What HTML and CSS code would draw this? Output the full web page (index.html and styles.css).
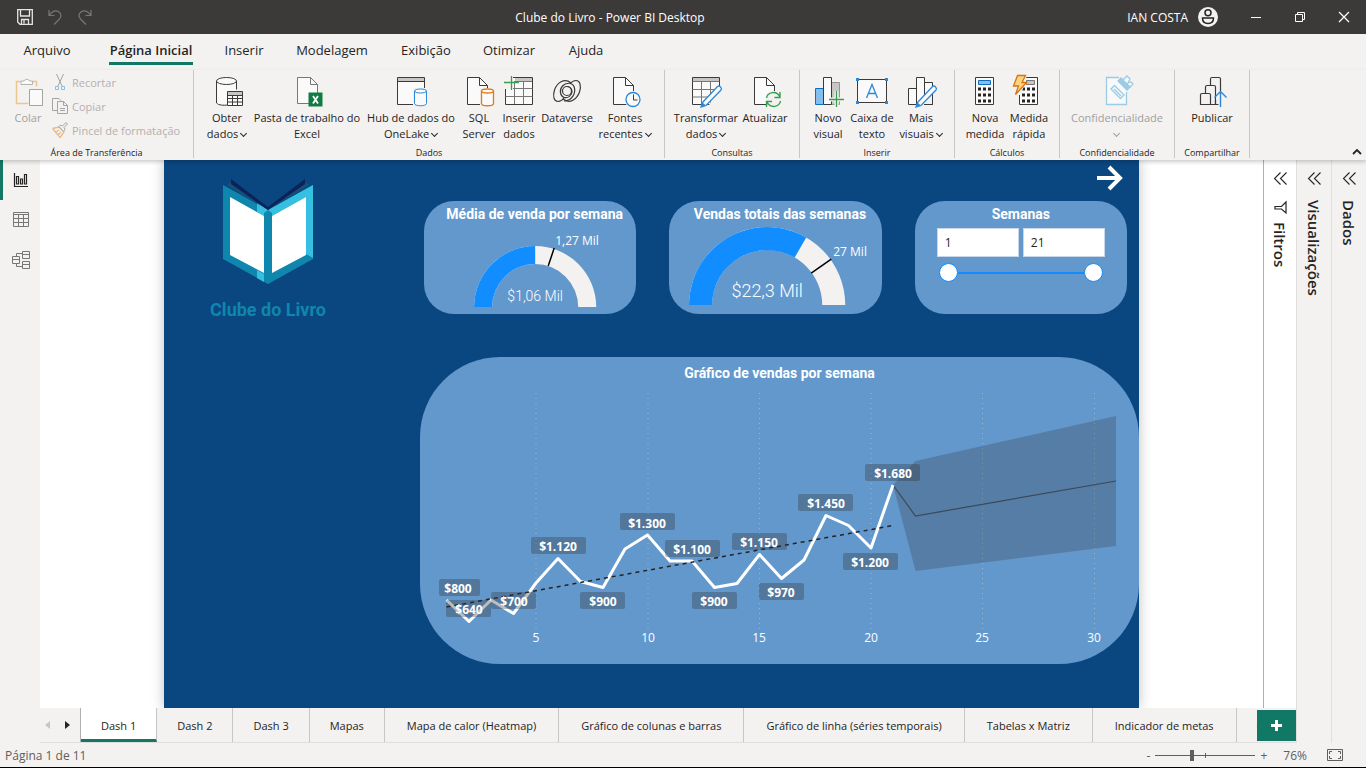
FILE: index.html
```html
<!DOCTYPE html>
<html lang="pt-BR">
<head>
<meta charset="utf-8">
<meta name="viewport" content="width=device-width, initial-scale=1">
<title>Clube do Livro - Power BI Desktop</title>
<link rel="stylesheet" href="styles.css">
</head>
<body>
<header class="titlebar">
  <div class="quick">
    <button class="quick-btn" aria-label="Salvar"><svg width="18" height="18" viewBox="0 0 18 18" fill="none" stroke="#e6e5e4" stroke-width="1.3"><path d="M1.700 1.700h14.600v14.600H4l-2.300-2.300zM4.500 2v6h9V2M5.500 16v-4.500h7V16M8 12v3.500"/></svg></button>
    <button class="quick-btn" aria-label="Desfazer"><svg width="18" height="18" viewBox="0 0 18 18" fill="none" stroke="#797775" stroke-width="1.200"><path d="M3 2v5.500h5.500M3 7.500C6 3 10 1.500 13 4c2.500 2 2.500 4.500.5 7L8 16.500"/></svg></button>
    <button class="quick-btn" aria-label="Refazer"><svg width="18" height="18" viewBox="0 0 18 18" fill="none" stroke="#797775" stroke-width="1.200"><path d="M15 2v5.500H9.500M15 7.500C12 3 8 1.500 5 4 2.500 6 2.500 8.500 4.500 11L10 16.500"/></svg></button>
  </div>
  <h1 class="title">Clube do Livro - Power BI Desktop</h1>
  <div class="window-tools">
    <span class="user">IAN COSTA</span>
    <svg class="avatar" width="20" height="20" viewBox="0 0 20 20"><circle cx="10" cy="10" r="10" fill="#f3f2f1"/><g fill="none" stroke="#252423" stroke-width="1.500"><circle cx="10" cy="5.800" r="3"/><path d="M4.500 11h11c0 3.500-2 5.500-5.500 5.500S4.500 14.500 4.500 11z"/></g></svg>
    <button class="win-btn" aria-label="Minimizar"><svg width="12" height="12" viewBox="0 0 12 12" fill="none" stroke="#fff"><path d="M1 6.500h10"/></svg></button>
    <button class="win-btn" aria-label="Restaurar"><svg width="12" height="12" viewBox="0 0 12 12" fill="none" stroke="#fff"><path d="M1.500 3.500h7v7h-7zM3.500 3.500v-2h7v7h-2"/></svg></button>
    <button class="win-btn" aria-label="Fechar"><svg width="12" height="12" viewBox="0 0 12 12" fill="none" stroke="#fff" stroke-width="1.300"><path d="M1 1l10 10M11 1L1 11"/></svg></button>
  </div>
</header>

<nav class="menu">
  <button class="menu-tab w48">Arquivo</button>
  <button class="menu-tab w84 active">Página Inicial</button>
  <button class="menu-tab w38">Inserir</button>
  <button class="menu-tab w74">Modelagem</button>
  <button class="menu-tab w50">Exibição</button>
  <button class="menu-tab w52">Otimizar</button>
  <button class="menu-tab w38">Ajuda</button>
</nav>

<div class="ribbon">
  <section class="group clipboard">
    <div class="tools">
      <button class="tool w40 off">
        <svg width="32" height="32" viewBox="0 0 32 32" fill="none"><path d="M8.500 5.500h-4v22h12M20.500 5.500h4v5" stroke="#ecc48f" stroke-width="1.500"/><path d="M9 8.500V5h3a3 3 0 0 1 5.500 0h3v3.500z" fill="#fafafa" stroke="#b5b3b1"/><path d="M17.500 13.500h13v16h-13z" fill="#fafafa" stroke="#a5a3a1"/></svg>
        <span>Colar</span></button>
      <div class="stack">
        <button class="mini"><svg width="16" height="16" viewBox="0 0 16 16" fill="none" stroke="#a6a4a2"><path d="M4.500 0l5.500 12M11.500 0L6 12"/><path d="M3.500 12.500h3v3h-3zM9.500 12.500h3v3h-3z" stroke="#8fbfe0"/></svg>Recortar</button>
        <button class="mini"><svg width="16" height="16" viewBox="0 0 16 16" fill="none" stroke="#a6a4a2"><path d="M5 12.500H.5V.5H7l2 2M5.500 3.500h6l4 4v8h-10zM11.500 3.500v4h4M8 10.500h5M8 12.500h5"/></svg>Copiar</button>
        <button class="mini"><svg width="16" height="16" viewBox="0 0 16 16" fill="none" stroke="#a6a4a2"><path d="M.5 6.500L7 5l5 5-4 5.500L.5 6.500M4 10l3-2M6 13l3-3" stroke="#e8ba85" stroke-width="1.300"/><path d="M7 4.500l1.500-1.500 2 1L14 .5l1.500 1.500L12 5.500l1 2-1.500 2z" fill="#f3f2f1"/></svg>Pincel de formatação</button>
      </div>
    </div>
    <h2 class="caption">Área de Transferência</h2>
  </section>

  <section class="group">
    <div class="tools">
      <button class="tool w50">
        <svg width="32" height="32" viewBox="0 0 32 32" fill="#fafafa" stroke="#3b3a39"><path d="M5.500 5v22c2 2.500 8 2.500 11 2M25.500 5v8.500" /><path d="M6 5h19v10h-9v13H8l-2-1z" stroke="none"/><ellipse cx="15.500" cy="5" rx="10" ry="3.500"/><path d="M16.500 15.500h15v14h-15z"/><path d="M17 16h14v3H17z" fill="#c8c6c4" stroke="none"/><path d="M16.500 19.500h15M16.500 22.500h15M16.500 26h15M21.500 19v10.500M26.500 19v10.500" fill="none"/></svg>
        <span>Obter<br>dados <i class="chev"></i></span></button>
      <button class="tool w110">
        <svg width="32" height="32" viewBox="0 0 32 32" fill="#fafafa" stroke="#797775"><path d="M6.500 1.500h13l7 7v19h-20z"/><path d="M19.500 1.500v7h7" fill="none"/><path d="M17.500 16.500h14v14h-14z" fill="#107c41" stroke="none"/><path d="M22 20l5 7.500M27 20l-5 7.500" stroke="#fff" stroke-width="1.800"/></svg>
        <span>Pasta de trabalho do<br>Excel</span></button>
      <button class="tool w98">
        <svg width="32" height="32" viewBox="0 0 32 32" fill="#fafafa" stroke="#3b3a39"><path d="M2.500 1.500h27v27h-27z"/><path d="M3 2h26v3H3z" fill="#c8c6c4" stroke="none"/><path d="M2.500 5.500h27" fill="none"/><path d="M18 12h14v18H18z" fill="#f3f2f1" stroke="none"/><path d="M19.500 15v12.500c0 3 12 3 12 0V15" stroke="#2b88d8"/><ellipse cx="25.500" cy="15" rx="6" ry="2" stroke="#2b88d8"/></svg>
        <span>Hub de dados do<br>OneLake <i class="chev"></i></span></button>
      <button class="tool w38">
        <svg width="32" height="32" viewBox="0 0 32 32" fill="#fafafa" stroke="#3b3a39"><path d="M4.500 1.500h12l8 8v19h-20z"/><path d="M16.500 1.500v8h8" fill="none"/><path d="M17 12h15v18H17z" fill="#f3f2f1" stroke="none"/><path d="M18.500 15v12.500c0 3 12 3 12 0V15" stroke="#e07b1b" stroke-width="1.300"/><ellipse cx="24.500" cy="15" rx="6" ry="2" stroke="#e07b1b" stroke-width="1.300"/></svg>
        <span>SQL<br>Server</span></button>
      <button class="tool w42">
        <svg width="32" height="32" viewBox="0 0 32 32" fill="#fafafa" stroke="#3b3a39"><path d="M2.500 1.500h27v27h-27z"/><path d="M12 2h17v3H12z" fill="#c8c6c4" stroke="none"/><path d="M2.500 12.500h27M2.500 20.500h27M11.500 5v23M20.500 5v23M12 5.500h17" fill="none" stroke="#797775"/><path d="M1 0h9v13H1z" fill="#f3f2f1" stroke="none"/><path d="M8.500 0v14M1 6.500h15" stroke="#34a04c" stroke-width="1.300"/></svg>
        <span>Inserir<br>dados</span></button>
      <button class="tool w54">
        <svg width="32" height="32" viewBox="0 0 32 32" fill="none" stroke="#3b3a39" stroke-width="1.200"><path d="M20 7C13 1.500 6 7 3.500 14 1.500 20.500 3 25.500 7 25.500c2.500 0 4.500-1.500 6-3.500"/><path d="M12 23c7 5.500 14 0 16.500-7C30.500 9.500 29 4.500 25 4.500c-2.500 0-4.500 1.500-6 3.500"/><path d="M13 25c8 0 12.500-8 10-14.500C21 6 14.500 6.500 11.500 10 8 14 9 20 13 21.500c4 1 8-2 8-6 0-3-2.500-5-5-5"/><circle cx="16" cy="15" r="4.500"/></svg>
        <span>Dataverse</span></button>
      <button class="tool w62">
        <svg width="32" height="32" viewBox="0 0 32 32" fill="#fafafa" stroke="#3b3a39"><path d="M4.500 1.500h12l8 8v19h-20z"/><path d="M16.500 1.500v8h8" fill="none"/><circle cx="24" cy="23.500" r="8.500" fill="#f3f2f1" stroke="none"/><circle cx="24" cy="23.500" r="7" stroke="#2b88d8" stroke-width="1.300"/><path d="M24.500 18.500v5.500h4" fill="none"/></svg>
        <span>Fontes<br>recentes <i class="chev"></i></span></button>
    </div>
    <h2 class="caption">Dados</h2>
  </section>

  <section class="group">
    <div class="tools">
      <button class="tool w66">
        <svg width="32" height="32" viewBox="0 0 32 32" fill="#fafafa" stroke="#3b3a39"><path d="M2.500 1.500h27v27h-27z"/><path d="M3 2h26v3H3z" fill="#c8c6c4" stroke="none"/><path d="M2.500 5.500h27M2.500 13.500h27M2.500 21h27M11.500 5v23M20.500 5v23" fill="none" stroke="#797775"/><path d="M17 32h15V9z" fill="#f3f2f1" stroke="none"/><path d="M12.500 26.500L27.500 10.500c2-1.500 5 1.500 3.500 3.500L16 29.500l-5 1.500z" stroke="#2b88d8" stroke-width="1.300"/><path d="M12.500 26.500l3.500 3-5 1.500z" fill="#2b88d8" stroke="none"/></svg>
        <span>Transformar<br>dados <i class="chev"></i></span></button>
      <button class="tool w52">
        <svg width="32" height="32" viewBox="0 0 32 32" fill="#fafafa" stroke="#3b3a39"><path d="M5.500 1.500h12l8 8v19h-20z"/><path d="M17.500 1.500v8h8" fill="none"/><circle cx="25" cy="23.500" r="8.500" fill="#f3f2f1" stroke="none"/><path d="M17.500 22c1-6 10-8 13.500-1M31 16v5.500h-5.500M31.500 25c-1 6-10 8-13.500 1M17.500 31v-5.500H23" fill="none" stroke="#34a04c" stroke-width="1.400"/></svg>
        <span>Atualizar</span></button>
    </div>
    <h2 class="caption">Consultas</h2>
  </section>

  <section class="group">
    <div class="tools">
      <button class="tool w40">
        <svg width="32" height="32" viewBox="0 0 32 32" fill="#fafafa" stroke="#3b3a39"><path d="M3.500 12.500h8v16h-8z" fill="#83beec" stroke="#106ebe"/><path d="M19.500 6.500h8v22h-8z" fill="#c8c6c4" stroke="#979593"/><path d="M11.500 1.500h8v27h-8z"/><path d="M24.500 15v16M17 23.500h15" stroke="#f3f2f1" stroke-width="4"/><path d="M24.500 15v16M17 23.500h15" stroke="#34a04c" stroke-width="1.300"/></svg>
        <span>Novo<br>visual</span></button>
      <button class="tool w48">
        <svg width="32" height="32" viewBox="0 0 32 32" fill="#fafafa" stroke="#3b3a39"><path d="M1.500 3.500h29v23h-29z"/><path d="M0 2h3v3H0zM29 2h3v3h-3zM0 25h3v3H0zM29 25h3v3h-3z" fill="#2b88d8" stroke="none"/><path d="M10.500 22L16 8.500 21.500 22M12.500 17.500h7" fill="none" stroke="#2b88d8" stroke-width="1.300"/></svg>
        <span>Caixa de<br>texto</span></button>
      <button class="tool w50">
        <svg width="32" height="32" viewBox="0 0 32 32" fill="#fafafa" stroke="#3b3a39"><path d="M3.500 12.500h8v16h-8zM19.500 6.500h8v22h-8zM11.500 1.500h8v27h-8z"/><path d="M13 31h14V12z" fill="#f3f2f1" stroke="none"/><path d="M27.500 19v9.500H19" fill="none"/><path d="M12.500 26.500L27.500 10.500c2-1.500 5 1.500 3.500 3.500L16 29.500l-5 1.500z" stroke="#2b88d8" stroke-width="1.300"/><path d="M12.500 26.500l3.500 3-5 1.500z" fill="#2b88d8" stroke="none"/></svg>
        <span>Mais<br>visuais <i class="chev"></i></span></button>
    </div>
    <h2 class="caption">Inserir</h2>
  </section>

  <section class="group">
    <div class="tools">
      <button class="tool w44">
        <svg width="32" height="32" viewBox="0 0 32 32" fill="#fafafa" stroke="#3b3a39"><path d="M6.500 1.500h18v27h-18z"/><path d="M9.500 4.500h12v4h-12z" fill="#83beec" stroke="#106ebe"/><path d="M9 13h13M9 19h13M9 25h13" stroke="#252423" stroke-width="3" stroke-dasharray="3 2"/></svg>
        <span>Nova<br>medida</span></button>
      <button class="tool w44">
        <svg width="32" height="32" viewBox="0 0 32 32" fill="#fafafa" stroke="#3b3a39"><path d="M6.500 1.500h18v27h-18z"/><path d="M13.500 4.500h8v4h-8z" fill="#c8c6c4" stroke="#797775"/><path d="M9 13h13M9 19h13M9 25h13" stroke="#252423" stroke-width="3" stroke-dasharray="3 2"/><path d="M2-1h12L8 19H0z" fill="#f3f2f1" stroke="none"/><path d="M4.500-.5h8L9 6.500h4.500L2.500 18.500 5.500 10h-5z" fill="#fcd581" stroke="#d9730d" stroke-width="1.300"/></svg>
        <span>Medida<br>rápida</span></button>
    </div>
    <h2 class="caption">Cálculos</h2>
  </section>

  <section class="group">
    <div class="tools">
      <button class="tool w98 off">
        <svg width="32" height="32" viewBox="0 0 32 32" fill="#f7f9fa" stroke="#9ccbe6" stroke-width="1.300"><path d="M18 1.500H5.500v27h20V16"/><path d="M10 13l3.500-3.500L23 19l-3.500 3.500zM13 13l7 7"/><path d="M17 5l3-3 9 9-3 3z" fill="#9ccbe6"/><path d="M22 4l4-4 3 3-2 4 3-1 2 2-3 3z"/></svg>
        <span>Confidencialidade<br><i class="chev"></i></span></button>
    </div>
    <h2 class="caption">Confidencialidade</h2>
  </section>

  <section class="group">
    <div class="tools">
      <button class="tool w58">
        <svg width="32" height="32" viewBox="0 0 32 32" fill="#f3f2f1" stroke="#3b3a39" stroke-width="1.200"><path d="M14.500 28.500V3c0-1 .5-1.500 1.500-1.500h7c1 0 1.500.5 1.500 1.500v25.500z"/><path d="M9.500 28.500V11c0-1 .5-1.500 1.500-1.500h7c1 0 1.500.5 1.500 1.500v17.500z"/><path d="M4.500 28.500V19c0-1 .5-1.500 1.500-1.500h7c1 0 1.500.5 1.500 1.500v9.500z"/><path d="M20.500 15h9v15h-9z" stroke="none"/><path d="M19.500 24v4.500h3" fill="none"/><path d="M24.500 31V16M18.500 21.500l6-6 6 6" fill="none" stroke="#2b88d8" stroke-width="1.400"/></svg>
        <span>Publicar</span></button>
    </div>
    <h2 class="caption">Compartilhar</h2>
  </section>
  <button class="collapse" aria-label="Recolher faixa"><svg width="10" height="8" viewBox="0 0 10 8" fill="none" stroke="#252423" stroke-width="1.800"><path d="M1 6l4-4 4 4"/></svg></button>
</div>

<div class="workspace">
  <nav class="views">
    <button class="view current" aria-label="Relatório"><svg width="16" height="16" viewBox="0 0 16 16" fill="none" stroke="#252423" stroke-width="1.200"><path d="M1.500 1v13.500H15M3.500 4.500h2v7.500h-2zM7.500 7h2v5h-2zM11.500 2.500h2V12h-2z"/></svg></button>
    <button class="view" aria-label="Dados"><svg width="16" height="16" viewBox="0 0 16 16" fill="none" stroke="#797775"><path d="M.5.500h15v14H.5zM.5 2.500h15M.5 6.500h15M.5 10.500h15M5.500 2.500v12M10.500 2.500v12"/></svg></button>
    <button class="view" aria-label="Modelo"><svg width="18" height="18" viewBox="0 0 18 18" fill="none" stroke="#797775"><path d="M.5 5.500h7v7h-7zM.5 8.500h7M10.500.500h7v7h-7zM10.500 3.500h7M10.500 10.500h7v7h-7zM10.500 13.500h7M4.500 5.500v-3h6M4.500 12.500v3h6"/></svg></button>
  </nav>

  <div class="center">
    <div class="stage">
      <div class="canvas">
        <main class="report">
          <aside class="brand">
            <svg class="book" width="92" height="106" viewBox="0 0 92 106"><path d="M1 6L46 31 91 6v74L46 105 1 80z" fill="#0f86ad"/><path d="M35 24l11 7L91 6v73l-7-4V18L50 37h-8l-7-4zM35 91l7 4v8l-7-4z" fill="#35bfe0"/><path d="M42 34l4-3 4 3v68l-4 3-4-3z" fill="#0f86ad"/><path d="M9 3L5 6l34 21zM83 3l4 3-34 21z" fill="#185078"/><path d="M9 5v-5l37 28L83 0v5L46 31z" fill="#0b2359"/><path d="M8 18l34 19v57L8 76zM84 18L50 37v57l34-18z" fill="#fff"/></svg>
            <p class="brand-name">Clube do Livro</p>
          </aside>
          <div class="board">
            <div class="next"><button class="next-btn" aria-label="Próxima página"><svg width="28" height="26" viewBox="0 0 28 26" fill="none" stroke="#fff" stroke-width="4"><path d="M1 13h24M13 2l11 11-11 11"/></svg></button></div>
            <div class="cards">
              <section class="card">
                <h3 class="card-title gauge-title">Média de venda por semana</h3>
                <svg class="plot" viewBox="0 0 212 89">
                  <path d="M50 82a61 61 0 0 1 122 0h-18a43 43 0 0 0-86 0z" fill="#f3f2f1"/>
                  <path d="M50 82a61 61 0 0 1 61-61v18a43 43 0 0 0-43 43z" fill="#118dff"/>
                  <path d="M124 41l6-18" stroke="#000" stroke-width="1.500"/>
                  <text class="goal" x="131" y="20">1,27 Mil</text>
                  <text class="value small" x="111" y="76">$1,06 Mil</text>
                </svg>
              </section>
              <section class="card">
                <h3 class="card-title gauge-title">Vendas totais das semanas</h3>
                <svg class="plot" viewBox="0 0 212 89">
                  <path d="M20 80a78 78 0 0 1 156 0h-23a55 55 0 0 0-110 0z" fill="#f3f2f1"/>
                  <path d="M20 80A78 78 0 0 1 137 12.500l-11.500 20A55 55 0 0 0 43 80z" fill="#118dff"/>
                  <path d="M142 48l20-14" stroke="#000" stroke-width="1.500"/>
                  <text class="goal" x="164" y="31">27 Mil</text>
                  <text class="value" x="98" y="72">$22,3 Mil</text>
                </svg>
              </section>
              <section class="card">
                <h3 class="card-title">Semanas</h3>
                <div class="slicer">
                  <div class="bounds">
                    <input class="bound" type="text" value="1" aria-label="Semana inicial">
                    <input class="bound" type="text" value="21" aria-label="Semana final">
                  </div>
                  <div class="span">
                    <input class="slide" type="range" min="1" max="11" value="1" aria-label="Início">
                    <input class="slide" type="range" min="11" max="21" value="21" aria-label="Fim">
                  </div>
                </div>
              </section>
            </div>
            <section class="chart">
              <h3 class="card-title">Gráfico de vendas por semana</h3>
              <svg class="plot" viewBox="420 389 719 275">
                <path class="grid" d="M536 393v236M648 393v236M759.500 393v236M871 393v236M982.500 393v236M1094.500 393v236"/>
                <path d="M893 485l22.500-24L1116 416v130L915.500 571z" fill="#333" fill-opacity=".26"/>
                <path d="M893 485l22.500 31L1116 481" fill="none" stroke="#3a4a58" stroke-width="1.200"/>
                <polyline points="446.500,600 469,621.500 491,600 513.500,613.500 536,583 558,558.500 580.500,581.500 603,587.500 625,549 647.500,535 670,561 692,561 714.500,587.500 737,583.500 759.500,554.500 781.500,578.500 804,560 826,515.500 848.500,525.500 871,548 893,485" fill="none" stroke="#fff" stroke-width="3" stroke-linejoin="round"/>
                <path d="M446.500 607L893 525.500" stroke="#252423" stroke-width="1.500" stroke-dasharray="4 4"/>
                <g class="tag">
                  <rect x="439" y="579" width="41" height="17" rx="2"/><rect x="446" y="600" width="45" height="17" rx="2"/><rect x="491" y="592" width="45" height="17" rx="2"/><rect x="531" y="537" width="55" height="17" rx="2"/><rect x="580" y="592" width="45" height="17" rx="2"/><rect x="620" y="513" width="55" height="17" rx="2"/><rect x="665" y="540" width="55" height="17" rx="2"/><rect x="692" y="592" width="45" height="17" rx="2"/><rect x="732" y="533" width="55" height="17" rx="2"/><rect x="759" y="583" width="45" height="17" rx="2"/><rect x="798" y="494" width="55" height="17" rx="2"/><rect x="843" y="553" width="55" height="17" rx="2"/><rect x="865" y="464" width="55" height="17" rx="2"/>
                </g>
                <g class="tag-text">
                  <text x="458" y="593">$800</text><text x="469" y="614">$640</text><text x="514" y="606">$700</text><text x="558" y="551">$1.120</text><text x="603" y="606">$900</text><text x="647" y="528">$1.300</text><text x="692" y="554">$1.100</text><text x="714" y="606">$900</text><text x="759" y="547">$1.150</text><text x="781" y="597">$970</text><text x="826" y="508">$1.450</text><text x="870" y="567">$1.200</text><text x="893" y="478">$1.680</text>
                </g>
                <g class="axis">
                  <text x="536" y="642">5</text><text x="648" y="642">10</text><text x="759" y="642">15</text><text x="871" y="642">20</text><text x="982" y="642">25</text><text x="1094" y="642">30</text>
                </g>
              </svg>
            </section>
          </div>
        </main>
      </div>
      <aside class="pane filters">
        <button class="expand" aria-label="Expandir Filtros"><svg width="13" height="13" viewBox="0 0 13 13" fill="none" stroke="#252423" stroke-width="1.100"><path d="M6.500.5l-6 6 6 6M12.500.5l-6 6 6 6"/></svg></button>
        <svg class="funnel" width="13" height="13" viewBox="0 0 13 13" fill="none" stroke="#252423" stroke-width="1.200"><path d="M12 1v11L7.500 8H1V5.500h6.500z"/></svg>
        <span class="pane-name">Filtros</span>
      </aside>
    </div>
    <nav class="pages">
      <button class="arrow dim" aria-label="Anterior"><svg width="5" height="8" viewBox="0 0 5 8"><path d="M5 0v8L0 4z" fill="currentColor"/></svg></button>
      <button class="arrow" aria-label="Próxima"><svg width="5" height="8" viewBox="0 0 5 8"><path d="M0 0v8l5-4z" fill="currentColor"/></svg></button>
      <div class="page-list">
        <button class="page on">Dash 1</button>
        <button class="page">Dash 2</button>
        <button class="page">Dash 3</button>
        <button class="page">Mapas</button>
        <button class="page wide">Mapa de calor (Heatmap)</button>
        <button class="page wide">Gráfico de colunas e barras</button>
        <button class="page wide">Gráfico de linha (séries temporais)</button>
        <button class="page wide">Tabelas x Matriz</button>
        <button class="page wide">Indicador de metas</button>
        <button class="page">G</button>
      </div>
      <button class="add" aria-label="Nova página"><svg width="11" height="11" viewBox="0 0 11 11" stroke="#fff" stroke-width="3"><path d="M5.500 0v11M0 5.500h11"/></svg></button>
    </nav>
  </div>

  <aside class="pane">
    <button class="expand" aria-label="Expandir Visualizações"><svg width="13" height="13" viewBox="0 0 13 13" fill="none" stroke="#252423" stroke-width="1.100"><path d="M6.500.5l-6 6 6 6M12.500.5l-6 6 6 6"/></svg></button>
    <span class="pane-name">Visualizações</span>
  </aside>
  <aside class="pane">
    <button class="expand" aria-label="Expandir Dados"><svg width="13" height="13" viewBox="0 0 13 13" fill="none" stroke="#252423" stroke-width="1.100"><path d="M6.500.5l-6 6 6 6M12.500.5l-6 6 6 6"/></svg></button>
    <span class="pane-name">Dados</span>
  </aside>
</div>

<footer class="status">
  <span class="count">Página 1 de 11</span>
  <button class="zoom-step" aria-label="Diminuir zoom">-</button>
  <input class="zoom" type="range" min="0" max="100" value="36" aria-label="Zoom">
  <button class="zoom-step" aria-label="Aumentar zoom">+</button>
  <span class="percent">76%</span>
  <button class="fit" aria-label="Ajustar à página"><svg width="16" height="12" viewBox="0 0 16 12" fill="none" stroke="#605e5c"><path d="M.5.5h15v11H.5z"/><path d="M2.500 5V2.500H5M11 2.500h2.500V5M13.500 7v2.500H11M5 9.500H2.500V7"/></svg></button>
</footer>
</body>
</html>
```
FILE: styles.css
```css
* { box-sizing: border-box; }
body {
  margin: 0;
  height: 100vh;
  display: flex;
  flex-direction: column;
  overflow: hidden;
  background: #f3f2f1;
  color: #252423;
  font-family: "Open Sans", "Noto Sans", sans-serif;
  font-size: 12px;
}
button {
  border: 0;
  padding: 0;
  margin: 0;
  background: none;
  color: inherit;
  font: inherit;
  white-space: nowrap;
}
h1, h2, h3, p { margin: 0; font-weight: 400; }
svg { display: block; flex: none; overflow: visible; }

/* title bar */
.titlebar {
  flex: none;
  height: 34px;
  display: grid;
  grid-template-columns: 1fr auto 1fr;
  align-items: center;
  padding: 0 16px;
  background: #3b3a39;
  color: #fff;
}
.quick { display: flex; gap: 12px; }
.title { font-size: 12px; padding-right: 146px; }
.window-tools { display: flex; align-items: center; justify-content: flex-end; }
.avatar { margin-left: 10px; }
.win-btn { width: 12px; margin-left: 32px; }

/* menu */
.menu { flex: none; height: 36px; display: flex; gap: 32px; padding-left: 23px; font-size: 13px; }
.menu-tab { height: 31px; display: flex; justify-content: center; align-items: center; }
.menu-tab:first-child { margin-right: 6px; }
.menu-tab.active { font-weight: 600; border-bottom: 3px solid #117865; padding-top: 3px; }

/* ribbon */
.ribbon {
  flex: none;
  height: 90px;
  display: flex;
  position: relative;
  z-index: 2;
  background: #f3f2f1;
  box-shadow: 0 2px 4px rgba(0, 0, 0, .2);
  font-size: 11px;
}
.group { display: flex; flex-direction: column; padding: 0 8px; margin-bottom: 2px; border-right: 1px solid #c8c6c4; }
.clipboard { width: 194px; }
.tools { flex: 1; display: flex; }
.tool { padding-top: 6px; line-height: 16px; text-align: center; display: flex; flex-direction: column; align-items: center; }
.tool svg { margin-bottom: 2px; }
.off { color: #a19f9d; }
.caption { height: 10px; font-size: 9px; line-height: 10px; text-align: center; white-space: nowrap; }
.stack { display: flex; flex-direction: column; margin-left: 4px; }
.mini { height: 24px; display: flex; align-items: center; gap: 4px; color: #b3b0ad; }
.collapse { margin: auto 4px 4px auto; }
.chev {
  display: inline-block;
  width: 5px;
  height: 5px;
  margin: 0 1px 2px 0;
  border: solid currentColor;
  border-width: 0 1px 1px 0;
  transform: rotate(45deg);
}
.w38 { width: 38px; }
.w40 { width: 40px; }
.w42 { width: 42px; }
.w44 { width: 44px; }
.w48 { width: 48px; }
.w50 { width: 50px; }
.w52 { width: 52px; }
.w54 { width: 54px; }
.w58 { width: 58px; }
.w62 { width: 62px; }
.w66 { width: 66px; }
.w74 { width: 74px; }
.w84 { width: 84px; }
.w98 { width: 98px; }
.w110 { width: 110px; }

/* workspace */
.workspace { flex: 1; min-height: 0; display: flex; }
.views { flex: none; width: 40px; display: flex; flex-direction: column; }
.view { height: 40px; display: flex; align-items: center; justify-content: center; border-left: 3px solid transparent; padding-right: 2px; }
.view.current { border-color: #117865; }
.center { flex: 1; min-width: 0; display: flex; flex-direction: column; }
.stage { flex: 1; min-height: 0; display: flex; background: #fff; }
.canvas { flex: 1; min-width: 0; display: flex; justify-content: center; overflow: hidden; }
.report {
  width: 100%;
  max-width: 975px;
  display: flex;
  background: #0a4780;
  box-shadow: 0 0 12px rgba(0, 0, 0, .25);
}
.brand { flex: none; width: 256px; padding: 19px 48px 0 0; display: flex; flex-direction: column; align-items: center; }
.brand-name { margin-top: 12px; font: 700 18px/26px "Roboto", sans-serif; color: #0f86ad; }
.board { flex: 1; min-width: 0; }
.next { height: 41px; display: flex; justify-content: flex-end; padding: 5px 15px 0 0; }
.next-btn { height: 26px; }
.cards { display: grid; grid-template-columns: repeat(3, minmax(0, 1fr)); gap: 33px; padding: 0 12px 0 4px; }
.card { height: 113px; border-radius: 30px; background: #6398cd; }
.card-title { height: 24px; font: 700 14px/26px "Roboto", sans-serif; color: #fff; text-align: center; white-space: nowrap; }
.gauge-title { padding-left: 9px; }
.plot { width: 100%; }
.goal { font-size: 12px; fill: #fff; }
.value { font: 300 18px "Roboto", sans-serif; fill: #fff; text-anchor: middle; }
.value.small { font-size: 14px; }
.slicer { padding: 3px 22px 0; }
.bounds { display: flex; gap: 4px; }
.bound { flex: 1; min-width: 0; height: 29px; border: 1px solid #c8d8e8; padding: 0 7px; background: #fff; color: #252423; font: inherit; }
.span { display: flex; padding: 6px 2px 0; }
.slide, .zoom { appearance: none; margin: 0; background: none; }
.slide { flex: 1; min-width: 0; height: 19px; }
.slide::-webkit-slider-runnable-track { height: 19px; background: linear-gradient(#118dff, #118dff) center / 100% 2px no-repeat; }
.slide::-webkit-slider-thumb { appearance: none; width: 19px; height: 19px; border: 1px solid #118dff; border-radius: 50%; background: #fff; }
.chart { margin-top: 43px; border-radius: 80px; background: #6398cd; }
.chart .card-title { height: 32px; line-height: 32px; }
.grid { stroke: #9db4c8; stroke-dasharray: 1 4; fill: none; }
.tag { fill: #333; fill-opacity: .32; }
.tag-text { font-size: 12px; font-weight: 700; fill: #fff; text-anchor: middle; }
.axis { font-size: 12px; fill: #fff; text-anchor: middle; }

/* side panes */
.pane { flex: none; width: 35px; display: flex; flex-direction: column; align-items: center; padding-top: 12px; border-left: 1px solid #e1dfdd; }
.filters { width: 33px; background: #fff; border-left-color: #b3b0ad; }
.expand { height: 13px; }
.funnel { margin-top: 16px; margin-bottom: -7px; }
.pane-name { writing-mode: vertical-rl; margin-top: 15px; font-size: 15px; font-weight: 600; line-height: 20px; }

/* page tabs */
.pages { flex: none; height: 35px; display: flex; border-bottom: 1px solid #e1dfdd; font-size: 11px; }
.arrow { width: 20px; padding-left: 5px; }
.arrow.dim { color: #c8c6c4; }
.page-list { flex: 1; min-width: 0; display: flex; overflow: hidden; border-left: 1px solid #b3b0ad; }
.page { flex: none; padding: 0 20px; border-right: 1px solid #c8c6c4; }
.page.wide { padding: 0 22px; }
.page:last-child { border-right: 0; padding-right: 0; }
.page.on { background: #fff; border-bottom: 3px solid #117865; padding-top: 3px; }
.add { width: 39px; margin: 2px 0 1px; display: flex; align-items: center; justify-content: center; background: #117865; }

/* status bar */
.status { flex: none; height: 25px; display: flex; align-items: center; padding: 0 23px 0 5px; border-bottom: 1px solid #000; color: #605e5c; }
.count { flex: 1; }
.zoom { width: 100px; height: 12px; margin: 0 5px; background: linear-gradient(#605e5c, #605e5c) center / 100% 1px no-repeat, linear-gradient(#605e5c, #605e5c) center / 1px 5px no-repeat; }
.zoom::-webkit-slider-thumb { appearance: none; width: 4px; height: 11px; background: #605e5c; }
.percent { margin: 0 20px 0 16px; }
```
